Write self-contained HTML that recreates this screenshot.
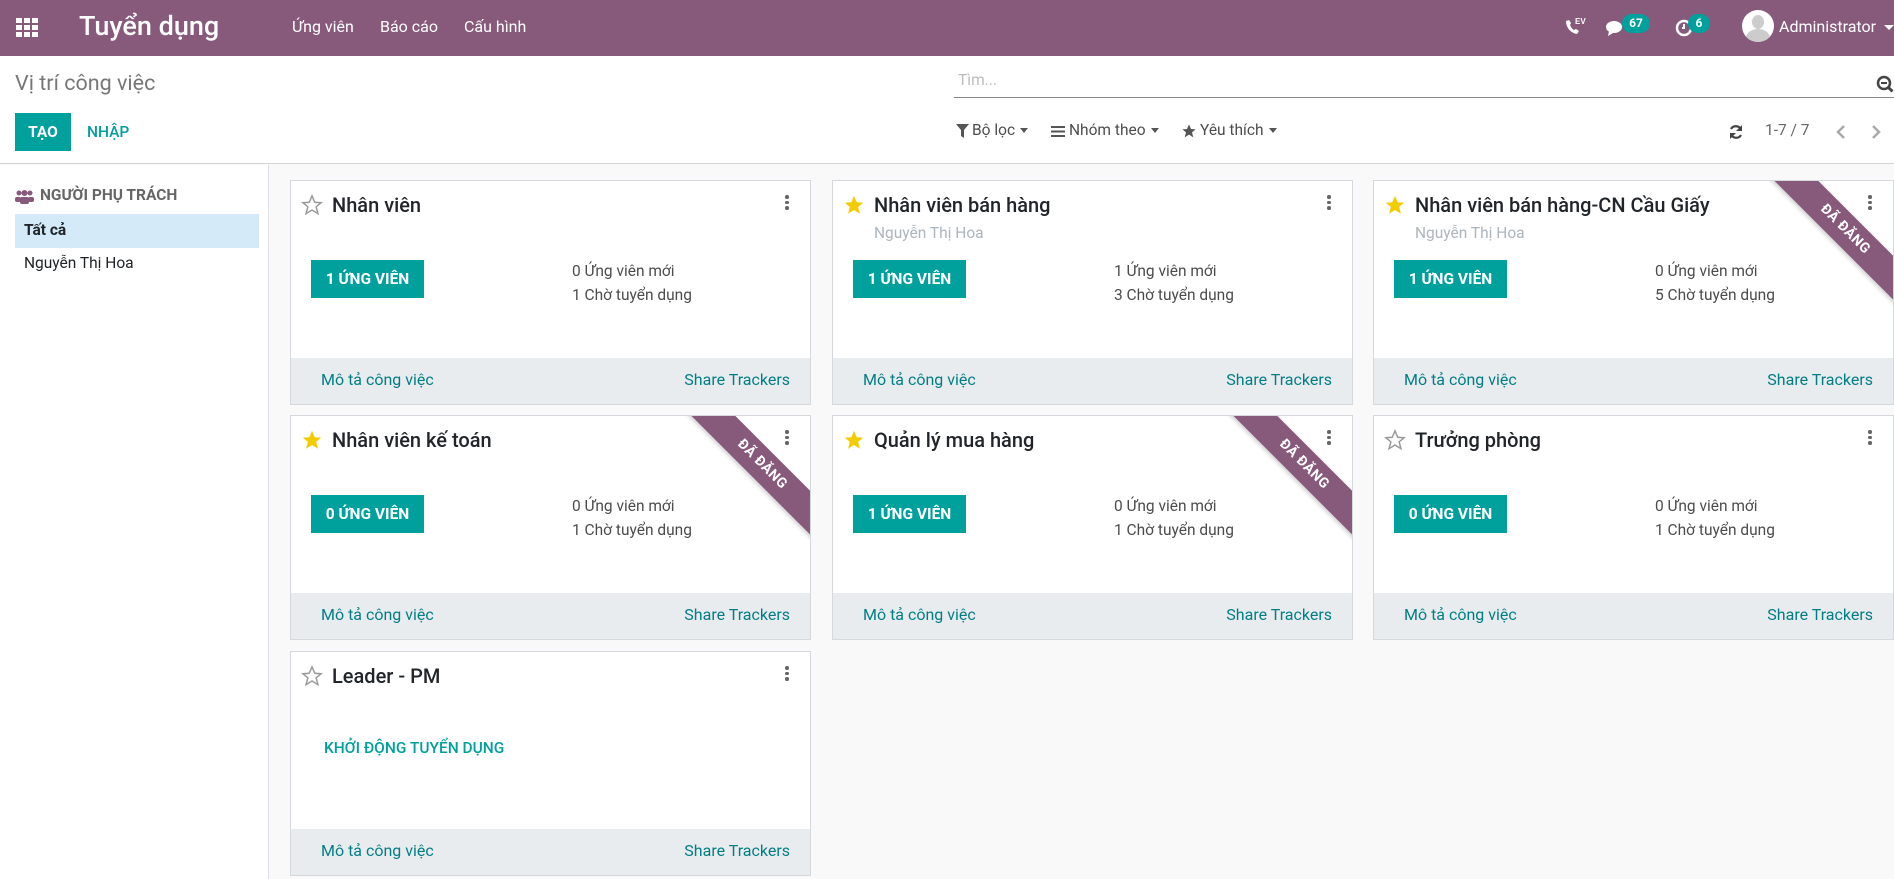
<!DOCTYPE html>
<html><head><meta charset="utf-8">
<style>
*{box-sizing:border-box;margin:0;padding:0}
body{width:1894px;height:879px;overflow:hidden;font-family:"Roboto","Liberation Sans","Noto Sans CJK SC",sans-serif;background:#f9f9f9;position:relative;color:#212529}
.abs{position:absolute}
.nav{left:0;top:0;width:1894px;height:56px;background:#875A7B;color:#fff}
.nav .t{position:absolute;white-space:nowrap}
.cp{left:0;top:56px;width:1894px;height:108px;background:#fff;border-bottom:1px solid #d5d5d5}
.side{left:0;top:165px;width:269px;height:714px;background:#fff;border-right:1px solid #dee2e6}
.card{position:absolute;width:521px;height:225px;background:#fff;border:1px solid #d5d8dc;overflow:hidden}
.card .title{position:absolute;left:41px;top:12px;font-size:20px;font-weight:500;color:#212529;white-space:nowrap}
.card .star{position:absolute;left:10px;top:13px;width:22px;height:22px}
.card .sub{position:absolute;left:41px;top:43px;font-size:15.5px;color:#adb5bd;white-space:nowrap}
.card .btn{position:absolute;left:20px;top:79px;width:113px;height:38px;background:#00A09D;color:#fff;font-weight:bold;font-size:15.5px;line-height:38px;text-align:center}
.card .st{position:absolute;left:281px;font-size:15.5px;color:#4c4c4c;white-space:nowrap}
.card .foot{position:absolute;left:0;bottom:0;width:100%;height:46px;background:#e9ecef;font-size:16px;color:#017e84}
.card .foot .a{position:absolute;left:30px;top:12px}
.card .foot .b{position:absolute;right:20px;top:12px}
.card .keb{position:absolute;right:21px;top:14px;width:4px}
.keb i{display:block;width:3.5px;height:3.5px;background:#666;border-radius:50%;margin-bottom:2px}
.rib{position:absolute;right:0;top:0;width:130px;height:130px;overflow:hidden}
.rib span{position:absolute;left:-18px;top:33px;width:200px;height:31px;line-height:31px;background:#875A7B;color:#fff;font-weight:bold;font-size:14px;text-align:center;transform:rotate(45deg);letter-spacing:.5px;box-shadow:0 2px 4px rgba(0,0,0,.2)}
.badge{position:absolute;background:#00A09D;color:#fff;font-size:12px;font-weight:bold;border-radius:10px;height:19px;line-height:19px;text-align:center}
.fl{position:absolute;font-size:15.5px;color:#4c4c4c;white-space:nowrap}
.car{display:inline-block;width:0;height:0;border-left:4.5px solid transparent;border-right:4.5px solid transparent;border-top:5px solid #555;vertical-align:middle;margin-left:5px}
</style></head><body>

<div class="abs nav">
  <svg class="t" style="left:16px;top:18px" width="22" height="20" viewBox="0 0 22 20"><g fill="#fff"><rect x="0" y="0" width="6" height="5"/><rect x="8" y="0" width="6" height="5"/><rect x="16" y="0" width="6" height="5"/><rect x="0" y="7" width="6" height="5"/><rect x="8" y="7" width="6" height="5"/><rect x="16" y="7" width="6" height="5"/><rect x="0" y="14" width="6" height="5"/><rect x="8" y="14" width="6" height="5"/><rect x="16" y="14" width="6" height="5"/></g></svg>
  <div class="t" style="left:79px;top:10px;font-size:27px;font-weight:500">Tuyển dụng</div>
  <div class="t" style="left:292px;top:17px;font-size:16px">Ứng viên</div>
  <div class="t" style="left:380px;top:17px;font-size:16px">Báo cáo</div>
  <div class="t" style="left:464px;top:17px;font-size:16px">Cấu hình</div>
  <svg class="t" style="left:1563px;top:16px" width="24" height="22" viewBox="0 0 24 22"><path d="M3 5c0 7 5 12 11 13l2-3-3-2-2 1c-2-1-3-3-4-5l1-2-2-3z" fill="#fff"/><text x="12" y="8" font-size="8" font-weight="bold" fill="#fff" font-family="Liberation Sans">EV</text></svg>
  <svg class="t" style="left:1606px;top:20px" width="20" height="18" viewBox="0 0 20 18"><ellipse cx="8" cy="7" rx="8" ry="6" fill="#fff"/><path d="M3 11l-1 5 5-3z" fill="#fff"/></svg>
  <div class="badge" style="left:1622px;top:14px;width:28px">67</div>
  <svg class="t" style="left:1675px;top:19px" width="18" height="18" viewBox="0 0 18 18"><circle cx="9" cy="9" r="7" fill="none" stroke="#fff" stroke-width="2.5"/><path d="M9 5v4h-2" stroke="#fff" stroke-width="2" fill="none"/></svg>
  <div class="badge" style="left:1688px;top:14px;width:22px">6</div>
  <div class="t" style="left:1742px;top:10px;width:32px;height:32px;border-radius:50%;background:#fff;overflow:hidden"><div style="position:absolute;left:10px;top:5px;width:12px;height:14px;border-radius:50%;background:#ccc"></div><div style="position:absolute;left:4px;top:19px;width:24px;height:18px;border-radius:50%;background:#ccc"></div></div>
  <div class="t" style="left:1779px;top:17px;font-size:16px">Administrator</div>
  <div class="t" style="left:1884px;top:25px;width:0;height:0;border-left:5px solid transparent;border-right:5px solid transparent;border-top:5px solid #fff"></div>
</div>

<div class="abs cp">
  <div class="abs" style="left:15px;top:15px;font-size:21.5px;color:#777">Vị trí công việc</div>
  <div class="abs" style="left:15px;top:57px;width:56px;height:38px;background:#00A09D;color:#fff;font-weight:bold;font-size:15.5px;line-height:38px;text-align:center">TẠO</div>
  <div class="abs" style="left:87px;top:57px;height:38px;color:#00A09D;font-weight:500;font-size:15.5px;line-height:38px">NHẬP</div>
  <div class="abs" style="left:958px;top:15px;font-size:15.5px;color:#bbb">Tìm...</div>
  <div class="abs" style="left:954px;top:41px;width:940px;height:1px;background:#888"></div>
  <svg class="abs" style="left:1876px;top:19px" width="18" height="18" viewBox="0 0 18 18"><circle cx="8" cy="8" r="6" fill="none" stroke="#444" stroke-width="2.5"/><path d="M5 8h6" stroke="#444" stroke-width="2"/><path d="M12.5 12.5l4 4" stroke="#444" stroke-width="3"/></svg>
</div>
<div class="abs" style="left:0;top:56px;width:1894px;height:108px">
  <svg class="abs" style="left:956px;top:68px" width="13" height="14" viewBox="0 0 13 14"><path d="M0 0h13l-5 6v8l-3-2V6z" fill="#555"/></svg>
  <div class="fl" style="left:972px;top:65px">Bộ lọc<span class="car"></span></div>
  <svg class="abs" style="left:1051px;top:70px" width="14" height="11" viewBox="0 0 14 11"><g fill="#555"><rect y="0" width="14" height="2"/><rect y="4.5" width="14" height="2"/><rect y="9" width="14" height="2"/></g></svg>
  <div class="fl" style="left:1069px;top:65px">Nhóm theo<span class="car"></span></div>
  <svg class="abs" style="left:1181px;top:67px" width="16" height="16" viewBox="0 0 24 24"><path d="M12 2l3 7 7 .5-5.5 4.5 2 7.5L12 17.5 5.5 21.5l2-7.5L2 9.5 9 9z" fill="#555"/></svg>
  <div class="fl" style="left:1200px;top:65px">Yêu thích<span class="car"></span></div>
  <svg class="abs" style="left:1728px;top:68px" width="16" height="16" viewBox="0 0 16 16"><path d="M13 6A5.5 5.5 0 0 0 3 5M3 10a5.5 5.5 0 0 0 10 1" fill="none" stroke="#444" stroke-width="2.2"/><path d="M14 1v6h-6zM2 15V9h6z" fill="#444"/></svg>
  <div class="fl" style="left:1765px;top:65px;color:#666">1-7 / 7</div>
  <svg class="abs" style="left:1835px;top:68px" width="12" height="16" viewBox="0 0 12 16"><path d="M9 2L3 8l6 6" fill="none" stroke="#aaa" stroke-width="2.5"/></svg>
  <svg class="abs" style="left:1870px;top:68px" width="12" height="16" viewBox="0 0 12 16"><path d="M3 2l6 6-6 6" fill="none" stroke="#aaa" stroke-width="2.5"/></svg>
</div>

<div class="abs side">
  <svg class="abs" style="left:15px;top:24px" width="19" height="15" viewBox="0 0 19 15"><g fill="#875A7B"><circle cx="4" cy="4" r="2.5"/><circle cx="15" cy="4" r="2.5"/><circle cx="9.5" cy="4" r="3"/><rect x="0" y="8" width="6" height="5" rx="2"/><rect x="13" y="8" width="6" height="5" rx="2"/><rect x="5" y="8" width="9" height="7" rx="2"/></g></svg>
  <div class="abs" style="left:40px;top:21px;font-size:15.5px;font-weight:bold;color:#666">NGƯỜI PHỤ TRÁCH</div>
  <div class="abs" style="left:15px;top:49px;width:244px;height:34px;background:#d4eaf8"></div>
  <div class="abs" style="left:24px;top:56px;font-size:15.5px;font-weight:bold">Tất cả</div>
  <div class="abs" style="left:24px;top:89px;font-size:15.5px">Nguyễn Thị Hoa</div>
</div>

<div class="card" style="left:290px;top:180px">
  <svg class="star" viewBox="0 0 24 24"><path d="M12 2l3 7 7 .5-5.5 4.5 2 7.5L12 17.5 5.5 21.5l2-7.5L2 9.5 9 9z" fill="none" stroke="#999" stroke-width="1.6"/></svg>
  <div class="title">Nhân viên</div><div class="keb"><i></i><i></i><i></i></div>
  <div class="btn">1 ỨNG VIÊN</div>
  <div class="st" style="top:81px">0 Ứng viên mới</div><div class="st" style="top:105px">1 Chờ tuyển dụng</div>
  <div class="foot"><span class="a">Mô tả công việc</span><span class="b">Share Trackers</span></div>
</div>
<div class="card" style="left:832px;top:180px">
  <svg class="star" viewBox="0 0 24 24"><path d="M12 2l3 7 7 .5-5.5 4.5 2 7.5L12 17.5 5.5 21.5l2-7.5L2 9.5 9 9z" fill="#f3cc00"/></svg>
  <div class="title">Nhân viên bán hàng</div><div class="sub">Nguyễn Thị Hoa</div><div class="keb"><i></i><i></i><i></i></div>
  <div class="btn">1 ỨNG VIÊN</div>
  <div class="st" style="top:81px">1 Ứng viên mới</div><div class="st" style="top:105px">3 Chờ tuyển dụng</div>
  <div class="foot"><span class="a">Mô tả công việc</span><span class="b">Share Trackers</span></div>
</div>
<div class="card" style="left:1373px;top:180px">
  <svg class="star" viewBox="0 0 24 24"><path d="M12 2l3 7 7 .5-5.5 4.5 2 7.5L12 17.5 5.5 21.5l2-7.5L2 9.5 9 9z" fill="#f3cc00"/></svg>
  <div class="title">Nhân viên bán hàng-CN Cầu Giấy</div><div class="sub">Nguyễn Thị Hoa</div>
  <div class="rib"><span>ĐÃ ĐĂNG</span></div><div class="keb"><i></i><i></i><i></i></div>
  <div class="btn">1 ỨNG VIÊN</div>
  <div class="st" style="top:81px">0 Ứng viên mới</div><div class="st" style="top:105px">5 Chờ tuyển dụng</div>
  <div class="foot"><span class="a">Mô tả công việc</span><span class="b">Share Trackers</span></div>
</div>

<div class="card" style="left:290px;top:415px">
  <svg class="star" viewBox="0 0 24 24"><path d="M12 2l3 7 7 .5-5.5 4.5 2 7.5L12 17.5 5.5 21.5l2-7.5L2 9.5 9 9z" fill="#f3cc00"/></svg>
  <div class="title">Nhân viên kế toán</div>
  <div class="rib"><span>ĐÃ ĐĂNG</span></div><div class="keb"><i></i><i></i><i></i></div>
  <div class="btn">0 ỨNG VIÊN</div>
  <div class="st" style="top:81px">0 Ứng viên mới</div><div class="st" style="top:105px">1 Chờ tuyển dụng</div>
  <div class="foot"><span class="a">Mô tả công việc</span><span class="b">Share Trackers</span></div>
</div>
<div class="card" style="left:832px;top:415px">
  <svg class="star" viewBox="0 0 24 24"><path d="M12 2l3 7 7 .5-5.5 4.5 2 7.5L12 17.5 5.5 21.5l2-7.5L2 9.5 9 9z" fill="#f3cc00"/></svg>
  <div class="title">Quản lý mua hàng</div>
  <div class="rib"><span>ĐÃ ĐĂNG</span></div><div class="keb"><i></i><i></i><i></i></div>
  <div class="btn">1 ỨNG VIÊN</div>
  <div class="st" style="top:81px">0 Ứng viên mới</div><div class="st" style="top:105px">1 Chờ tuyển dụng</div>
  <div class="foot"><span class="a">Mô tả công việc</span><span class="b">Share Trackers</span></div>
</div>
<div class="card" style="left:1373px;top:415px">
  <svg class="star" viewBox="0 0 24 24"><path d="M12 2l3 7 7 .5-5.5 4.5 2 7.5L12 17.5 5.5 21.5l2-7.5L2 9.5 9 9z" fill="none" stroke="#999" stroke-width="1.6"/></svg>
  <div class="title">Trưởng phòng</div><div class="keb"><i></i><i></i><i></i></div>
  <div class="btn">0 ỨNG VIÊN</div>
  <div class="st" style="top:81px">0 Ứng viên mới</div><div class="st" style="top:105px">1 Chờ tuyển dụng</div>
  <div class="foot"><span class="a">Mô tả công việc</span><span class="b">Share Trackers</span></div>
</div>

<div class="card" style="left:290px;top:651px">
  <svg class="star" viewBox="0 0 24 24"><path d="M12 2l3 7 7 .5-5.5 4.5 2 7.5L12 17.5 5.5 21.5l2-7.5L2 9.5 9 9z" fill="none" stroke="#999" stroke-width="1.6"/></svg>
  <div class="title">Leader - PM</div><div class="keb"><i></i><i></i><i></i></div>
  <div class="abs" style="left:33px;top:87px;font-size:15.5px;font-weight:500;color:#00A09D">KHỞI ĐỘNG TUYỂN DỤNG</div>
  <div class="foot"><span class="a">Mô tả công việc</span><span class="b">Share Trackers</span></div>
</div>

</body></html>
